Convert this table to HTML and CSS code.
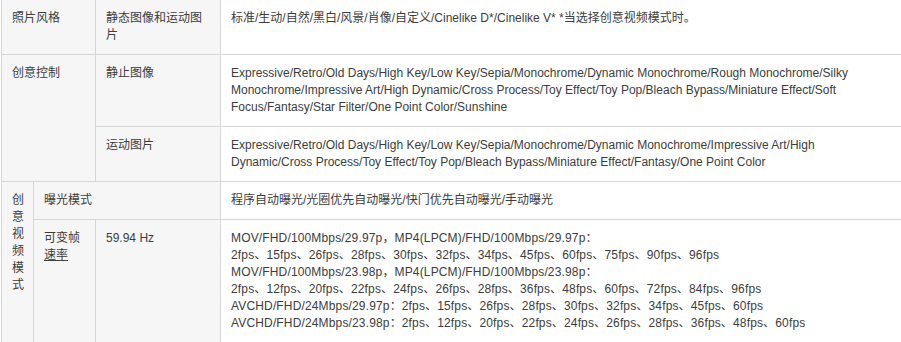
FILE: index.html
```html
<!DOCTYPE html>
<html lang="zh-CN">
<head>
<meta charset="utf-8">
<title>规格</title>
<link rel="stylesheet" href="styles.css">
</head>
<body>
<table class="spec">
  <colgroup>
    <col class="c-a">
    <col class="c-b">
    <col class="c-c">
    <col class="c-d">
  </colgroup>
  <tbody>
    <tr>
      <td class="lbl" colspan="2">照片风格</td>
      <td class="lbl">静态图像和运动图片</td>
      <td class="val">标准/生动/自然/黑白/风景/肖像/自定义/Cinelike D*/Cinelike V* *当选择创意视频模式时。</td>
    </tr>
    <tr>
      <td class="lbl" colspan="2" rowspan="2">创意控制</td>
      <td class="lbl">静止图像</td>
      <td class="val">Expressive/Retro/Old Days/High Key/Low Key/Sepia/Monochrome/Dynamic Monochrome/Rough Monochrome/Silky Monochrome/Impressive Art/High Dynamic/Cross Process/Toy Effect/Toy Pop/Bleach Bypass/Miniature Effect/Soft Focus/Fantasy/Star Filter/One Point Color/Sunshine</td>
    </tr>
    <tr>
      <td class="lbl">运动图片</td>
      <td class="val">Expressive/Retro/Old Days/High Key/Low Key/Sepia/Monochrome/Dynamic Monochrome/Impressive Art/High Dynamic/Cross Process/Toy Effect/Toy Pop/Bleach Bypass/Miniature Effect/Fantasy/One Point Color</td>
    </tr>
    <tr>
      <td class="lbl narrow" rowspan="2">创意视频模式</td>
      <td class="lbl" colspan="2">曝光模式</td>
      <td class="val">程序自动曝光/光圈优先自动曝光/快门优先自动曝光/手动曝光</td>
    </tr>
    <tr>
      <td class="lbl">可变帧<span class="link">速率</span></td>
      <td class="lbl">59.94 Hz</td>
      <td class="val rates">MOV/FHD/100Mbps/29.97p，MP4(LPCM)/FHD/100Mbps/29.97p：<br>2fps、15fps、26fps、28fps、30fps、32fps、34fps、45fps、60fps、75fps、90fps、96fps<br>MOV/FHD/100Mbps/23.98p，MP4(LPCM)/FHD/100Mbps/23.98p：<br>2fps、12fps、20fps、22fps、24fps、26fps、28fps、36fps、48fps、60fps、72fps、84fps、96fps<br>AVCHD/FHD/24Mbps/29.97p：2fps、15fps、26fps、28fps、30fps、32fps、34fps、45fps、60fps<br>AVCHD/FHD/24Mbps/23.98p：2fps、12fps、20fps、22fps、24fps、26fps、28fps、36fps、48fps、60fps</td>
    </tr>
  </tbody>
</table>
</body>
</html>
```

FILE: styles.css
```css
html, body {
  margin: 0;
  padding: 0;
  background: #fff;
}

body {
  padding-left: 1px;
  font-family: "Liberation Sans", Arial, "Noto Sans CJK SC", sans-serif;
  font-size: 12px;
  line-height: 17px;
  color: #3c3c3c;
}

.spec {
  border-collapse: separate;
  border-spacing: 0;
  table-layout: fixed;
  width: 900px;
  border-left: 1px solid #d6d6d6;
}

.c-a { width: 32px; }
.c-b { width: 62px; }
.c-c { width: 125px; }
.c-d { width: 681px; }

.spec td {
  vertical-align: top;
  padding: 10px;
  border-right: 1px solid #d6d6d6;
  border-bottom: 1px solid #d6d6d6;
  word-wrap: break-word;
}

.spec td.lbl {
  background: #f6f6f6;
}

.spec td.val {
  background: #fff;
  padding-right: 21px;
  border-right: none;
}

.spec td.rates {
  letter-spacing: 0.15px;
}

.spec td.narrow {
  padding-left: 10px;
  padding-right: 0;
}

.link {
  text-decoration: underline;
}
```
